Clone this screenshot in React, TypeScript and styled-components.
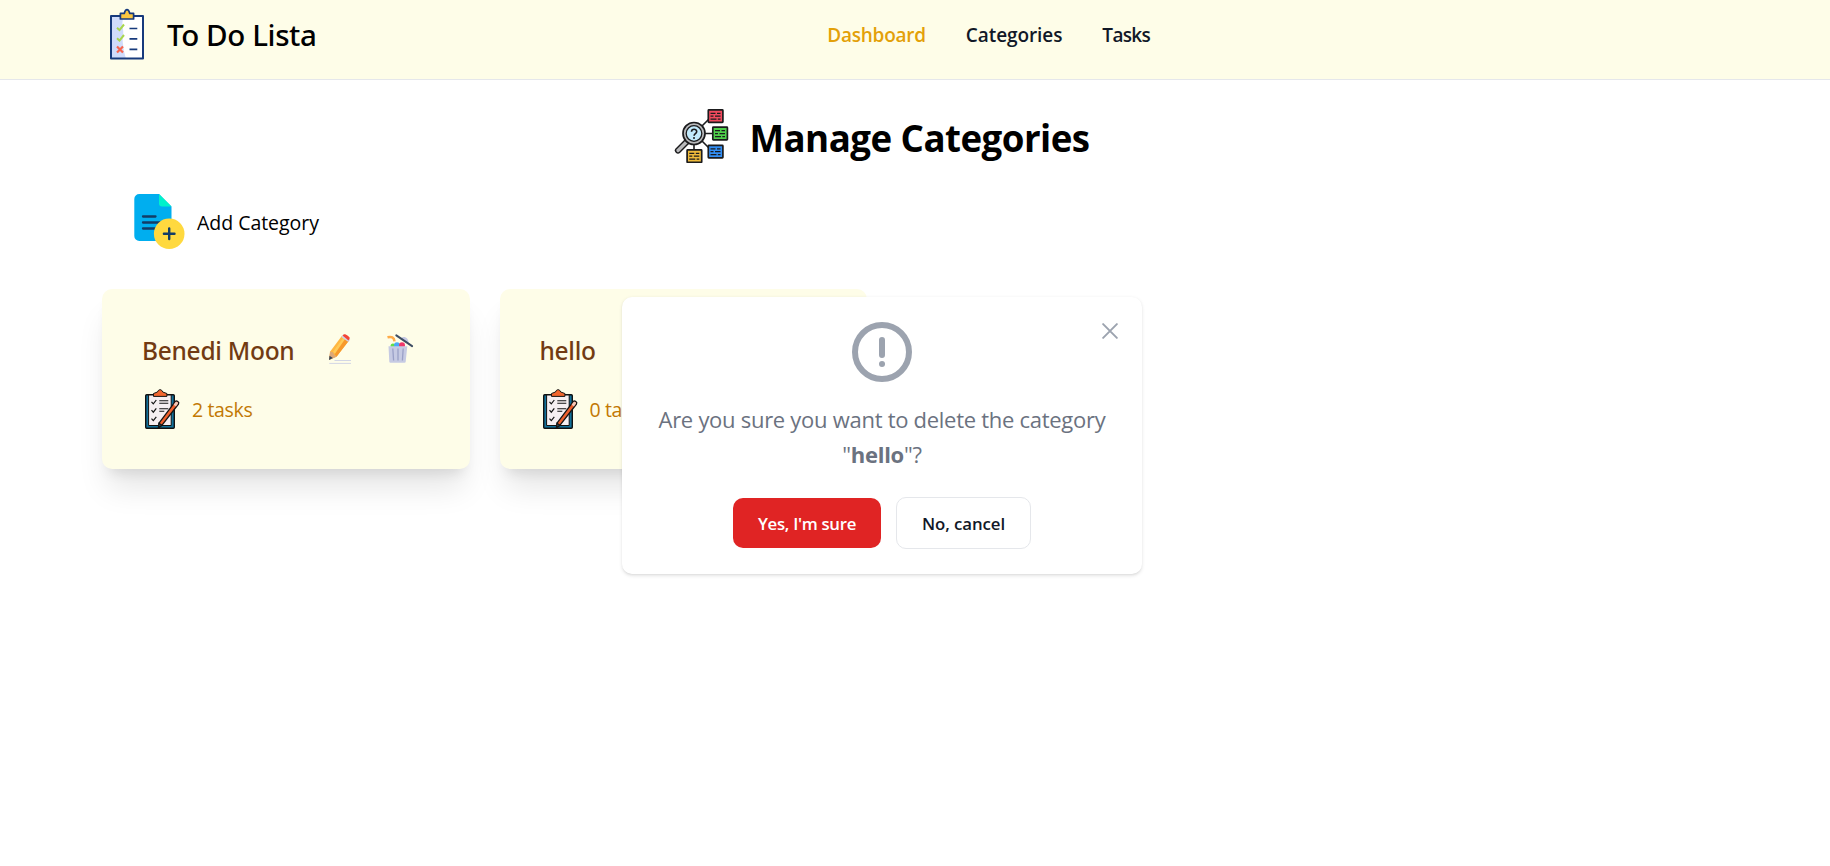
import React from "react";
import styled, { createGlobalStyle, css } from "styled-components";

const GlobalStyle = createGlobalStyle`
  *, *::before, *::after { box-sizing: border-box; }
  body {
    margin: 0;
    background: #fff;
    color: #000;
    font-family: "Open Sans", "Noto Sans", sans-serif;
  }
  h1, h2, h3, p { margin: 0; }
  svg { display: block; flex: none; }
  button { font: inherit; cursor: pointer; }
`;

const mediumText = css`
  font-family: "Noto Sans", "Open Sans", sans-serif;
  font-weight: 500;
`;

const Page = styled.div`
  position: relative;
  min-height: 866px;
  overflow: hidden;
`;

const Header = styled.header`
  height: 80px;
  background: #fefde8;
  border-bottom: 1px solid #e5e7eb;
`;

const HeaderInner = styled.div`
  width: 1150px;
  padding: 8px 0 0 102px;
  display: flex;
  justify-content: space-between;
  align-items: flex-start;
`;

const Brand = styled.a`
  display: flex;
  align-items: flex-start;
  gap: 15px;
`;

const BrandName = styled.span`
  ${mediumText}
  font-size: 29.5px;
  line-height: 54px;
  letter-spacing: -0.38px;
  white-space: nowrap;
`;

const Nav = styled.nav`
  display: flex;
  gap: 40px;
  padding-top: 12px;
`;

const NavLink = styled.a<{ $active?: boolean }>`
  font-size: 19px;
  font-weight: 600;
  line-height: 30px;
  letter-spacing: ${(p) => (p.$active ? "-0.25px" : "-0.08px")};
  color: ${(p) => (p.$active ? "#e3a008" : "#111827")};

  &:last-child { letter-spacing: -0.7px; }
`;

const Main = styled.main`
  width: 1764px;
`;

const Heading = styled.div`
  display: flex;
  justify-content: center;
  align-items: flex-start;
  gap: 19px;
  height: 60px;
  margin-top: 27px;
`;

const Title = styled.h1`
  font-size: 36.7px;
  line-height: 63px;
  font-weight: 700;
  letter-spacing: -0.54px;
`;

const AddButton = styled.a`
  display: flex;
  align-items: flex-start;
  gap: 12px;
  margin: 26px 0 0 132px;
  height: 60px;
`;

const AddLabel = styled.span`
  font-size: 19.5px;
  letter-spacing: -0.03px;
  line-height: 60px;
`;

const CardGrid = styled.section`
  display: grid;
  grid-template-columns: repeat(2, 367.5px);
  gap: 30px;
  margin: 36px 0 0 102px;
`;

const Card = styled.article`
  height: 180px;
  padding: 40px;
  border-radius: 10px;
  background: #fefde8;
  box-shadow: 0 25px 31px -6px rgb(0 0 0 / 0.1), 0 10px 12.5px -7.5px rgb(0 0 0 / 0.1);
`;

const CardTop = styled.div`
  display: flex;
  align-items: center;
  gap: 30.5px;
  height: 40px;
`;

const CardName = styled.h3`
  ${mediumText}
  font-size: 24.5px;
  line-height: 40px;
  letter-spacing: -0.28px;
  padding-top: 3px;
  color: #723b13;
`;

const TaskRow = styled.div`
  display: flex;
  align-items: flex-start;
  gap: 10px;
  margin-top: 20px;
  height: 40px;
`;

const TaskCount = styled.p`
  font-size: 19.5px;
  line-height: 42px;
  letter-spacing: -0.36px;
  color: #c27803;
`;

const Dialog = styled.div`
  position: absolute;
  top: 297px;
  left: 622px;
  width: 520px;
  height: 277px;
  padding: 25px;
  border-radius: 10px;
  background: #fff;
  box-shadow: 0 1.25px 3.75px rgb(0 0 0 / 0.1), 0 1.25px 2.5px -1.25px rgb(0 0 0 / 0.1);
  display: flex;
  flex-direction: column;
  align-items: center;
`;

const CloseButton = styled.button`
  position: absolute;
  top: 14px;
  right: 12.5px;
  width: 40px;
  height: 40px;
  padding: 0;
  border: 0;
  background: none;
  display: grid;
  place-items: center;
`;

const Question = styled.p`
  margin-top: 20px;
  font-size: 22px;
  line-height: 35px;
  letter-spacing: -0.28px;
  color: #6b7280;
  text-align: center;
  white-space: nowrap;

  strong { font-weight: 700; }
`;

const Actions = styled.div`
  display: flex;
  align-items: center;
  gap: 15px;
  margin-top: 25px;
`;

const ActionButton = styled.button<{ $danger?: boolean }>`
  width: ${(p) => (p.$danger ? 148 : 135)}px;
  height: ${(p) => (p.$danger ? 50 : 52)}px;
  padding: 0;
  font-size: 16.8px;
  font-weight: 600;
  line-height: 25px;
  letter-spacing: ${(p) => (p.$danger ? "-0.3px" : "-0.05px")};
  white-space: nowrap;
  border-radius: 10px;
  border: ${(p) => (p.$danger ? "0" : "1px solid #e5e7eb")};
  background: ${(p) => (p.$danger ? "#e02424" : "#fff")};
  color: ${(p) => (p.$danger ? "#fff" : "#111827")};
`;

const ChecklistLogo = () => (
  <svg width="50" height="52" viewBox="0 0 50 52" fill="none">
    <path d="M9 8h32v42.500H9z" fill="#fff" />
    <path d="M9 8h13c-2 5-2 8-1 13 1 6-1 9 0 15 .5 6 1.500 10 3 14.500H9z" fill="#d0dcfb" />
    <path d="M9 8h32v42.500H9z" stroke="#173a7c" strokeWidth="2" strokeLinejoin="round" />
    <path d="M18.400 11V5.400h3.800C22.900 3 23.800 1.600 25 1.600s2.100 1.400 2.800 3.800h3.800V11z" fill="#fac641" stroke="#173a7c" strokeWidth="1.700" strokeLinejoin="round" />
    <path d="m15 19.700 2.500 2.400 4.500-5.600M15 30.200l2.500 2.400L22 27" stroke="#a9d64c" strokeWidth="2" />
    <path d="m15 38.500 6 6m0-6-6 6" stroke="#f8664f" strokeWidth="2.200" />
    <path d="M27.500 20.500h7.800M27.500 30.900h7.800M27.500 41.300h7.800" stroke="#173a7c" strokeWidth="1.700" />
  </svg>
);

const Box = ({ x, y, color }: { x: number; y: number; color: string }) => (
  <g transform={`translate(${x} ${y})`} stroke="#1b1b1d">
    <rect x=".8" y=".8" width="14.600" height="12.600" rx=".6" fill={color} strokeWidth="1.700" />
    <path d="M3 4.300h5m1.500 0H13M3 7.200h3m1.500 0H13M3 10.200h6m1.300 0H13" strokeWidth="1.200" />
  </g>
);

const CategoriesIcon = () => (
  <svg width="56" height="56" viewBox="0 0 56 56" fill="none">
    <path d="m27 20 8-8M31 26.500h9M27 33l8 8M20 37v8" stroke="#1b1b1d" strokeWidth="1.600" />
    <Box x={33.500} y={2} color="#f24a5e" />
    <Box x={38} y={19.400} color="#4fd14b" />
    <Box x={33.500} y={37.500} color="#338ff5" />
    <Box x={12.300} y={42} color="#f0bc3b" />
    <path d="M12.500 35 4 43.500" stroke="#1b1b1d" strokeWidth="6.200" strokeLinecap="round" />
    <path d="M12.500 35 4 43.500" stroke="#b9b9bb" strokeWidth="3.300" strokeLinecap="round" />
    <circle cx="20" cy="26.500" r="11" fill="#b9b9bb" stroke="#1b1b1d" strokeWidth="1.700" />
    <circle cx="20" cy="26.500" r="7.800" fill="#c2eafc" stroke="#1b1b1d" strokeWidth="1.300" />
    <path d="M17.500 24.700c0-3.300 5.200-3.300 5.200-.2 0 2.200-2.600 2-2.600 4.300" stroke="#1b1b1d" strokeWidth="1.600" />
    <circle cx="20" cy="31" r="1" fill="#1b1b1d" />
  </svg>
);

const AddFileIcon = () => (
  <svg width="53" height="56" viewBox="0 0 53 56" fill="none">
    <path d="M7.300 1H27l12.500 12.500V43a5 5 0 0 1-5 5H7.300a5 5 0 0 1-5-5V6a5 5 0 0 1 5-5z" fill="#00aeef" />
    <path d="m27 1 12.500 12.500H30a3 3 0 0 1-3-3z" fill="#00f2cb" />
    <path d="M11 23.500h12.500M11 29.500h17M11 35.500h13" stroke="#123c66" strokeWidth="2.300" strokeLinecap="round" />
    <circle cx="37.200" cy="40.700" r="15.300" fill="#ffd93f" />
    <path d="M37.200 35.500v10.500M31.900 40.700h10.600" stroke="#123c66" strokeWidth="2.400" strokeLinecap="round" />
  </svg>
);

const PencilIcon = () => (
  <svg width="30" height="30" viewBox="0 0 30 30" fill="none">
    <path d="m4 26 1.200-8.400L17 1.800l7 4.600-12.500 16.400z" fill="#ffb742" />
    <path d="M8.500 18.500 20 4l4 2.400-12.500 16.400z" fill="#f7992b" />
    <path d="m8 18 10.600-14.800 1.800 1.200L9.800 20z" fill="#ffcb58" />
    <path d="m4 26 1-8.400 3 .8 1 2.300 2.500 2.100z" fill="#dda878" />
    <path d="m4 26 .5-4.200 3.400 2.300z" fill="#35475b" />
    <path d="m16.300 2.900 2-2.500 6.900 5.100-1.800 2.400z" fill="#cfd1e5" />
    <path d="m17.500 1.400 1.200-1c1-1 5.400 1.700 6 3.400.2.800-.5 1.600-1.200 2.600z" fill="#f44336" />
    <path d="M9.500 26.500H26M4.300 29.400H26" stroke="#d3d6e5" strokeWidth="1" />
  </svg>
);

const TrashIcon = () => (
  <svg width="30" height="30" viewBox="0 0 30 30" fill="none">
    <path d="M15.500 4.500c3-3.500 8.500-1 8 5z" fill="#c5c8e3" />
    <path d="M2.500 3.300c4-1 6.500 0 7 4" stroke="#ffac4a" strokeWidth="2.600" />
    <circle cx="8" cy="12" r="2.500" fill="#63df48" />
    <circle cx="12" cy="11.300" r="3" fill="#4aaaf5" />
    <circle cx="17" cy="11.300" r="3" fill="#f0386b" />
    <path d="M3.500 12.300h18.800l-1.600 15.500q-.1 1-1.200 1h-14q-1.100 0-1.200-1z" fill="#c6cae3" />
    <path d="m7.800 14.500.8 12M13 14.500v12m5.200-12-.8 12" stroke="#9aa0c7" strokeWidth="1.300" />
    <path d="m11.300 1.400 15.800 10.800" stroke="#3e4d63" strokeWidth="2" strokeLinecap="round" />
  </svg>
);

const ClipboardIcon = () => (
  <svg width="40" height="40" viewBox="0 0 40 40" fill="none">
    <rect x="3.700" y="5.700" width="28.600" height="33.600" rx="1" fill="#11719b" stroke="#111" strokeWidth="1.400" />
    <path d="M6.600 6h22.600v30.500H6.600z" fill="#f6eff2" stroke="#111" strokeWidth="1" />
    <path d="M11.500 7.400V4.500l4-1.500c.6-1.500 1.300-2.300 2.600-2.300S20 1.500 20.700 3l4.200 1.500v2.900z" fill="#f2662f" stroke="#151515" strokeWidth="1" strokeLinejoin="round" />
    <path d="m9.500 12.800 1.800 2 3-3.800M9.500 21.200l1.800 2 3-3.800M9.500 29.600l1.800 2 3-3.800" stroke="#151515" strokeWidth="1.200" />
    <path d="M17.300 11.800h9M17.300 14.200h9M17.300 19.800h9M17.300 22.300h5" stroke="#151515" strokeWidth="1.100" />
    <path d="M17 34.200 33.200 12.600c1.300-1.500 4.500.6 3.300 2.400L20 36.200l-3 2.200z" fill="#f0602d" stroke="#151515" strokeWidth="1.300" strokeLinejoin="round" />
    <path d="m31.600 15.700 2-2.600c.9-1 3.100.5 2.300 1.700l-2 2.600z" fill="#f5c9b8" />
    <path d="m16.400 38.400.6-4.200 3 2z" fill="#315363" stroke="#151515" strokeWidth="1.200" />
  </svg>
);

const AlertIcon = () => (
  <svg width="60" height="60" viewBox="0 0 20 20" fill="none">
    <path
      d="M10 11V6m0 8h.01M19 10a9 9 0 1 1-18 0 9 9 0 0 1 18 0Z"
      stroke="#9ca3af"
      strokeWidth="2"
      strokeLinecap="round"
      strokeLinejoin="round"
    />
  </svg>
);

const CloseIcon = () => (
  <svg width="16" height="16" viewBox="0 0 14 14" fill="none">
    <path d="m1 1 12 12M13 1 1 13" stroke="#9ca3af" strokeWidth="1.700" strokeLinecap="round" />
  </svg>
);

const categories = [
  { name: "Benedi Moon", tasks: 2 },
  { name: "hello", tasks: 0 },
];

export default function App() {
  return (
    <Page>
      <GlobalStyle />
      <Header>
        <HeaderInner>
          <Brand>
            <ChecklistLogo />
            <BrandName>To Do Lista</BrandName>
          </Brand>
          <Nav>
            <NavLink $active>Dashboard</NavLink>
            <NavLink>Categories</NavLink>
            <NavLink>Tasks</NavLink>
          </Nav>
        </HeaderInner>
      </Header>

      <Main>
        <Heading>
          <CategoriesIcon />
          <Title>Manage Categories</Title>
        </Heading>
        <AddButton>
          <AddFileIcon />
          <AddLabel>Add Category</AddLabel>
        </AddButton>
        <CardGrid>
          {categories.map((c) => (
            <Card key={c.name}>
              <CardTop>
                <CardName>{c.name}</CardName>
                <PencilIcon />
                <TrashIcon />
              </CardTop>
              <TaskRow>
                <ClipboardIcon />
                <TaskCount>{c.tasks} tasks</TaskCount>
              </TaskRow>
            </Card>
          ))}
        </CardGrid>
      </Main>

      <Dialog role="dialog">
        <CloseButton aria-label="Close">
          <CloseIcon />
        </CloseButton>
        <AlertIcon />
        <Question>
          Are you sure you want to delete the category
          <br />"<strong>hello</strong>"?
        </Question>
        <Actions>
          <ActionButton $danger>Yes, I'm sure</ActionButton>
          <ActionButton>No, cancel</ActionButton>
        </Actions>
      </Dialog>
    </Page>
  );
}
